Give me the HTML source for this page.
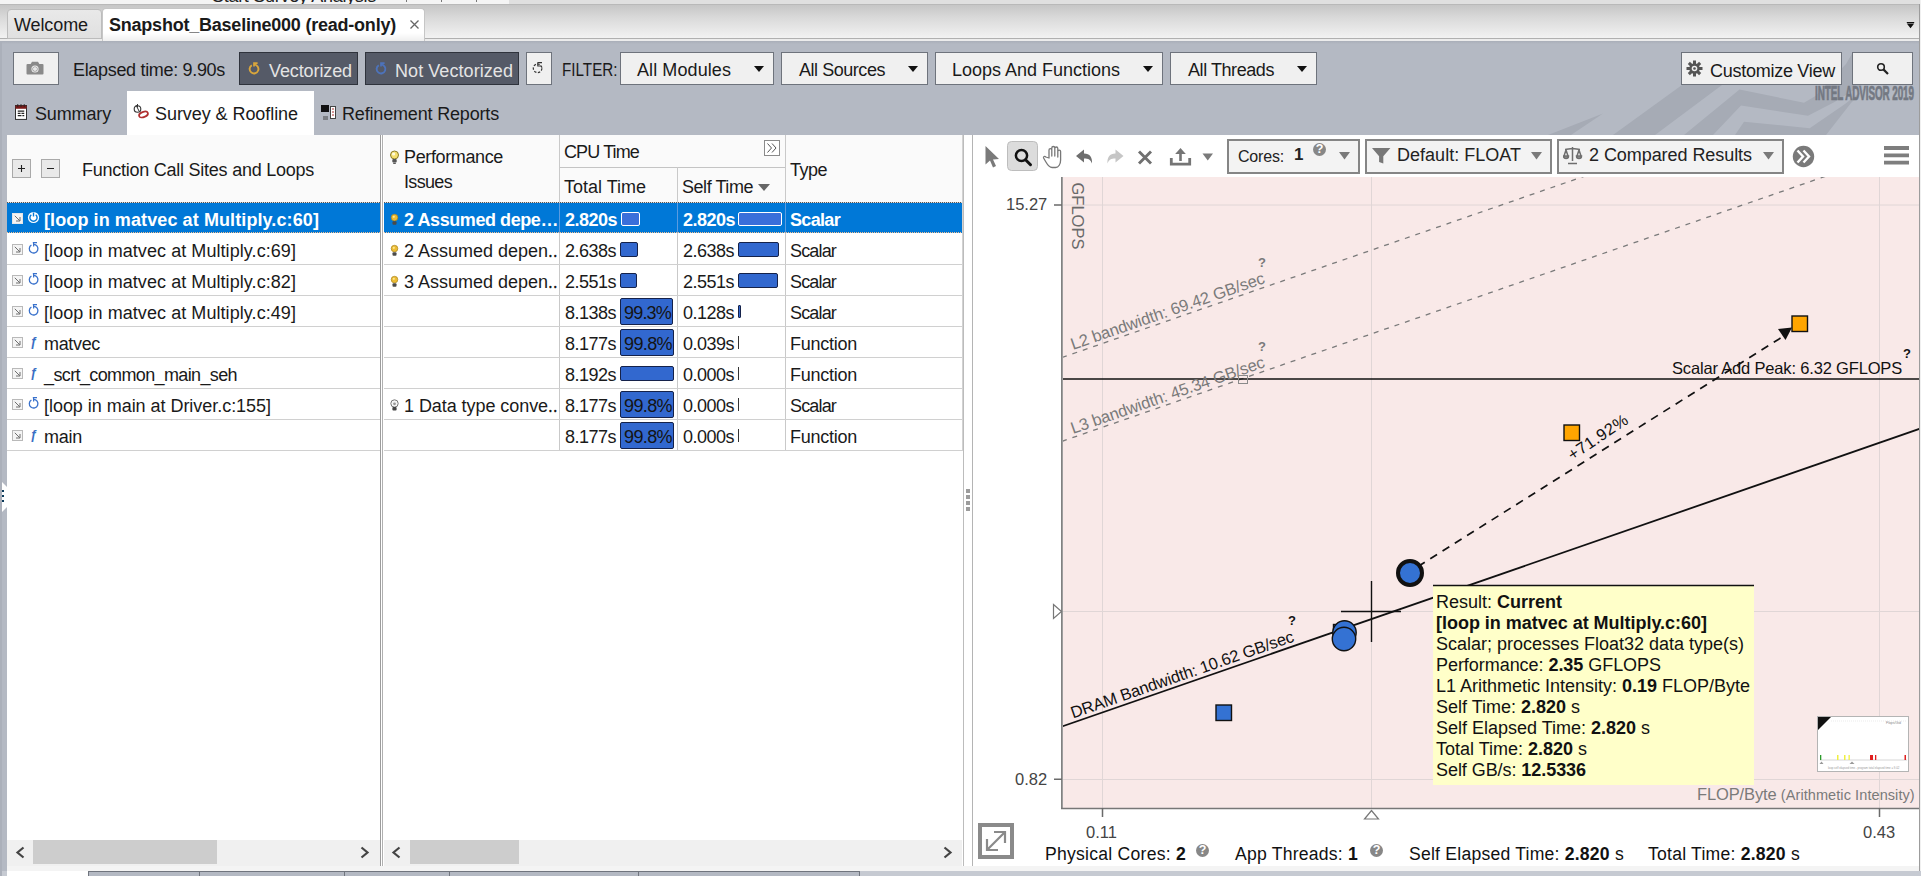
<!DOCTYPE html>
<html><head><meta charset="utf-8"><title>Intel Advisor</title>
<style>
*{box-sizing:border-box}
html,body{margin:0;padding:0}
body{width:1921px;height:876px;overflow:hidden;position:relative;background:#b4b9c3;font-family:"Liberation Sans",sans-serif;font-size:18px;color:#1a1a1a}
.a{position:absolute;white-space:pre}
.t{position:absolute;white-space:pre;line-height:24px;height:24px}
.btn{position:absolute;background:#f0f0f0;border:1px solid #6e737c}
.dk{position:absolute;background:#555a67;border:1px solid #2f333c;color:#e6e6e6}
.arr{position:absolute;width:0;height:0;border-left:5.8px solid transparent;border-right:5.8px solid transparent;border-top:6.4px solid #111}

.hdr{position:absolute;background:#fafafa}
.vl{position:absolute;width:1px;background:#c9c9c9}
.hl{position:absolute;height:1px;background:#d0d0d0}
.sel{position:absolute;background:#0078d7;height:30px}
.ex{position:absolute;width:12px;height:12px;border:1px solid #b4b4b4;background:#fbfbfb}
.bar{position:absolute;background:#3268cf;border:1px solid #15224a;border-radius:2px}
.bart{position:absolute;white-space:pre;font-size:18px;line-height:24px;color:#141414}
.sb{position:absolute;background:#f0f0f0;height:26px;top:840px}
.th{position:absolute;background:#cdcdcd;height:24px;top:840px}

.rbox{position:absolute;top:139px;height:35px;border:2px solid #858585;background:#f3f3f3}
.ct{position:absolute;white-space:pre;font-size:17px;line-height:20px;height:20px;color:#222}
.tip{position:absolute;white-space:pre;font-size:18px;line-height:21px;height:21px;color:#111;left:1436px}
.q{position:absolute;width:13px;height:13px;border-radius:50%;background:#878787;color:#fff;font-size:12.5px;font-weight:700;line-height:13.5px;text-align:center}
svg text{font-family:"Liberation Sans",sans-serif}
/*SECTION-CSS*/
</style></head>
<body>
<!-- top strip -->
<div class="a" style="left:0;top:0;width:1921px;height:4px;background:#f4f4f4"></div>
<div class="a" style="left:509px;top:0;width:1412px;height:4px;background:#e0e0e0"></div>
<div class="a" style="left:0;top:4px;width:1921px;height:1px;background:#b9b9b9"></div>
<div class="a" style="left: 212px; top: -13px; width: 170px; height: 17px; overflow: hidden; font-size: 18px; line-height: 19px; color: rgb(34, 34, 34); letter-spacing: -0.289px;">Start Survey Analysis</div><div class="a" style="left:406px;top:0;width:1px;height:2px;background:#777"></div><div class="a" style="left:441px;top:0;width:1px;height:2px;background:#777"></div><div class="a" style="left:476px;top:0;width:1px;height:2px;background:#777"></div>
<!-- tab bar -->
<div class="a" style="left:0;top:5px;width:1921px;height:33px;background:linear-gradient(#c6c6c6,#d8d8d8 35%,#f2f2f2)"></div>
<div class="a" style="left:0;top:38px;width:1921px;height:1px;background:#b0b0b0"></div><div class="a" style="left:0;top:39px;width:1921px;height:2px;background:#ececec"></div>
<div class="a" style="left:0;top:41px;width:1921px;height:3px;background:linear-gradient(#a9aeb8,#b4b9c3)"></div>
<div class="a" style="left:7px;top:9px;width:95px;height:30px;background:linear-gradient(#e9e9e9,#e0e0e0);border:1px solid #bcbcbc;border-radius:4px 4px 0 0"></div>
<div class="t" id="t_welcome" style="left: 14px; top: 13px; letter-spacing: -0.1px;">Welcome</div>
<div class="a" style="left:102px;top:8px;width:323px;height:33px;background:linear-gradient(#fff 75%,#efefef);border:1px solid #c6c6c6;border-bottom:none;border-radius:4px 4px 0 0"></div>
<div class="t" id="t_snap" style="left: 109px; top: 13px; font-weight: 700; letter-spacing: -0.222px;">Snapshot_Baseline000 (read-only)</div>
<svg class="a" style="left:409px;top:19px" width="11" height="11"><path d="M1.5 1.5 L9.5 9.5 M9.5 1.5 L1.5 9.5" stroke="#666" stroke-width="1.300" fill="none"></path></svg>
<svg class="a" style="left:1906px;top:21px" width="9" height="8"><path d="M.8 1h7.400v.9h-7.400zM.8 2.600h7.400l-3.700 4.600z" fill="#111"></path></svg>

<!-- toolbar decorative chevrons -->
<svg class="a" style="left:1480px;top:41px" width="441" height="94" viewBox="1480 41 441 94">
<g fill="#a6abb5">
<path d="M1548 135 L1603 113.500 L1571 135 Z"></path>
<path d="M1613 135 L1682 85 L1722 85 L1655 135 Z"></path>
<path d="M1684 135 L1739.500 89.500 L1804 102.700 L1815.500 96 L1846 64 L1853 52 L1880 52 L1880 85 L1862 85 L1834.600 102 L1808 115.800 L1741 105.600 L1713 135 Z"></path>
<path d="M1735 135 L1744 121.700 L1809.700 128.300 L1845 104 L1868 86 L1851 103 L1826 135 Z"></path>
</g>
</svg>
<!-- camera -->
<div class="btn" style="left:13px;top:52px;width:46px;height:33px"></div>
<svg class="a" style="left:26px;top:60px" width="18" height="16" viewBox="0 0 18 16"><path d="M1.5 4 h3.2 l1.3 -2.2 h6 l1.3 2.2 h3.2 a1 1 0 0 1 1 1 v8.5 a1 1 0 0 1 -1 1 h-15 a1 1 0 0 1 -1 -1 v-8.5 a1 1 0 0 1 1 -1z" fill="#8a8a8a"></path><circle cx="9" cy="9" r="3.6" fill="#f0f0f0"></circle><circle cx="9" cy="9" r="2.6" fill="#8a8a8a"></circle><circle cx="9" cy="9" r="2.1" fill="#e8e8e8"></circle></svg>
<div class="t" id="t_el" style="left: 73px; top: 58px; letter-spacing: -0.321px;">Elapsed time: 9.90s</div>
<!-- Vectorized -->
<div class="dk" style="left:239px;top:52px;width:119px;height:33px"></div>
<svg class="a" style="left:247px;top:61px" width="14" height="15" viewBox="0 0 14 15"><path d="M7 3.600 A4.400 4.400 0 1 1 4.800 4.200" stroke="#d9a63c" stroke-width="1.900" fill="none"></path><path d="M6.200 2.200 H10.600 M7 1.400 V5.600" stroke="#d9a63c" stroke-width="1.700" fill="none"></path></svg>
<div class="t" style="left: 269px; top: 59px; color: rgb(228, 228, 228); letter-spacing: -0.106px;">Vectorized</div>
<div class="dk" style="left:365px;top:52px;width:154px;height:33px"></div>
<svg class="a" style="left:374px;top:61px" width="14" height="15" viewBox="0 0 14 15"><path d="M7 3.600 A4.400 4.400 0 1 1 4.800 4.200" stroke="#4d73bb" stroke-width="1.900" fill="none"></path><path d="M6.200 2.200 H10.600 M7 1.400 V5.600" stroke="#4d73bb" stroke-width="1.700" fill="none"></path></svg>
<div class="t" style="left: 395px; top: 59px; color: rgb(228, 228, 228); letter-spacing: 0.067px;">Not Vectorized</div>
<div class="btn" style="left:526px;top:52px;width:26px;height:33px"></div>
<svg class="a" style="left:531px;top:60px" width="14" height="15" viewBox="0 0 14 15"><circle cx="6.600" cy="8.300" r="4.300" stroke="#333" stroke-width="1.200" fill="none" stroke-dasharray="2.400 1.500"></circle><path d="M6.500 2.600 H11 M6.800 2.600 V6 H10" stroke="#333" stroke-width="1.100" fill="none"></path></svg>
<div class="t" style="left:562px;top:58px;transform-origin:0 0;transform:scaleX(.845)">FILTER:</div>
<div class="btn" style="left:620px;top:52px;width:154px;height:33px"></div>
<div class="t" style="left: 637px; top: 58px; letter-spacing: 0.087px;">All Modules</div>
<div class="arr" style="left:754px;top:66px"></div>
<div class="btn" style="left:781px;top:52px;width:147px;height:33px"></div>
<div class="t" style="left: 799px; top: 58px; letter-spacing: -0.459px;">All Sources</div>
<div class="arr" style="left:908px;top:66px"></div>
<div class="btn" style="left:935px;top:52px;width:228px;height:33px"></div>
<div class="t" style="left: 952px; top: 58px; letter-spacing: -0.007px;">Loops And Functions</div>
<div class="arr" style="left:1143px;top:66px"></div>
<div class="btn" style="left:1170px;top:52px;width:147px;height:33px"></div>
<div class="t" style="left: 1188px; top: 58px; letter-spacing: -0.429px;">All Threads</div>
<div class="arr" style="left:1297px;top:66px"></div>
<div class="btn" style="left:1681px;top:52px;width:161px;height:33px"></div>
<svg class="a" style="left:1686px;top:60px" width="17" height="17" viewBox="-8.5 -8.5 17 17"><g fill="#555"><circle r="5.2"></circle><rect x="-1.5" y="-8" width="3" height="16"></rect><rect x="-1.5" y="-8" width="3" height="16" transform="rotate(45)"></rect><rect x="-1.5" y="-8" width="3" height="16" transform="rotate(90)"></rect><rect x="-1.5" y="-8" width="3" height="16" transform="rotate(135)"></rect></g><circle r="2.8" fill="#f0f0f0"></circle><circle r="1.3" fill="#555"></circle></svg>
<div class="t" style="left: 1710px; top: 59px; letter-spacing: -0.266px;">Customize View</div>
<div class="btn" style="left:1852px;top:52px;width:61px;height:33px"></div>
<svg class="a" style="left:1876px;top:62px" width="14" height="14" viewBox="0 0 14 14"><circle cx="5" cy="5" r="3.3" stroke="#222" stroke-width="1.6" fill="none"></circle><path d="M7.4 7.4 L12 12" stroke="#222" stroke-width="2.2"></path></svg>
<div class="a" id="t_intel" style="left:1815px;top:82px;font-size:20px;line-height:22px;font-weight:700;color:#737882;transform-origin:0 0;transform:scaleX(.495);-webkit-text-stroke:.7px #737882;letter-spacing:-.2px">INTEL ADVISOR 2019</div>
<!-- subtabs -->
<div class="a" style="left:127px;top:91px;width:187px;height:44px;background:#fff"></div>
<svg class="a" style="left:15px;top:104px" width="12" height="16" viewBox="0 0 13 17"><rect x=".5" y="1.5" width="12" height="15" fill="#fff" stroke="#222"></rect><rect x=".5" y="1.5" width="12" height="3.5" fill="#7a1a1a"></rect><path d="M3 0v3M6.5 0v3M10 0v3" stroke="#222"></path><path d="M3 7.5h7M3 10h3M7 10h3M3 12.5h4M8 12.5h2" stroke="#222" stroke-width="1.3"></path></svg>
<div class="t" style="left: 35px; top: 102px; letter-spacing: -0.145px;">Summary</div>
<svg class="a" style="left:132px;top:103px" width="18" height="17" viewBox="0 0 18 17"><circle cx="5.5" cy="6" r="3.3" stroke="#333" stroke-width="1.1" fill="none"></circle><path d="M5.5 1v3.5M4 2l3 6" stroke="#333" stroke-width="1" fill="none"></path><ellipse cx="11.5" cy="11.5" rx="4.6" ry="2.6" transform="rotate(-22 11.5 11.5)" stroke="#b03030" stroke-width="1.8" fill="#fff"></ellipse></svg>
<div class="t" style="left: 155px; top: 102px; letter-spacing: -0.063px;">Survey &amp; Roofline</div>
<svg class="a" style="left:320px;top:104px" width="17" height="17" viewBox="0 0 17 17"><rect x="1" y="1" width="8" height="7" fill="#111"></rect><rect x="10.5" y="2.5" width="5" height="12" fill="#fff" stroke="#444"></rect><path d="M12 5h2M12 8h2M12 11h2" stroke="#b03030" stroke-width="1.2"></path><path d="M3 13h5M3 15h5" stroke="#444" stroke-width="1"></path></svg>
<div class="t" style="left: 342px; top: 102px; letter-spacing: -0.171px;">Refinement Reports</div>

<!-- left panel -->
<div class="a" style="left:7px;top:135px;width:373px;height:731px;background:#fff"></div>
<div class="hdr" style="left:7px;top:135px;width:373px;height:67px"></div>
<div class="hl" style="left:7px;top:202px;width:373px;background:#bdbdbd"></div>
<div class="a" style="left:12px;top:159px;width:19px;height:19px;background:#e9e9e9;border:1px solid #a9a9a9"></div>
<div class="a" style="left:41px;top:159px;width:19px;height:19px;background:#e9e9e9;border:1px solid #a9a9a9"></div>
<svg class="a" style="left:12px;top:159px" width="48" height="19"><path d="M6 9.5h7M9.5 6v7M35 9.5h7" stroke="#222" stroke-width="1.1"></path></svg>
<div class="t" style="left: 82px; top: 158px; letter-spacing: -0.247px;">Function Call Sites and Loops</div>
<div class="sel" style="left:7px;top:203px;width:373px"></div>
<div class="a" style="left:7px;top:202px;width:373px;height:1px;background:repeating-linear-gradient(90deg,#555 0 1px,#ddd 1px 2px)"></div>
<div class="a" style="left:7px;top:232px;width:373px;height:1px;background:repeating-linear-gradient(90deg,#f4c090 0 1px,#0078d7 1px 2px)"></div>
<svg class="a" style="left:12px;top:213px" width="11" height="11" viewBox="0 0 11 11"><rect x=".5" y=".5" width="10" height="10" fill="#f4f4f4" stroke="#e6e6e6"></rect><path d="M2.800 2.800 L7.800 7.800 M8 4 V8 H4" stroke="#6e6e6e" stroke-width="1" fill="none"></path></svg>
<svg class="a" style="left:27px;top:210px" width="13" height="14" viewBox="0 0 13 14"><circle cx="6.5" cy="7.5" r="5.6" fill="#fff"></circle><path d="M4.3 4.8 A3.6 3.6 0 1 0 8.7 4.8" stroke="#0078d7" stroke-width="1.4" fill="none"></path><path d="M6.5 2.5 v4" stroke="#0078d7" stroke-width="1.4"></path></svg>
<div class="t" style="left: 44px; top: 208px; color: rgb(255, 255, 255); font-weight: 700; letter-spacing: 0.099px;">[loop in matvec at Multiply.c:60]</div>
<div class="hl" style="left:7px;top:264px;width:373px"></div>
<svg class="a" style="left:12px;top:244px" width="11" height="11" viewBox="0 0 11 11"><rect x=".5" y=".5" width="10" height="10" fill="#f4f4f4" stroke="#b9b9b9"></rect><path d="M2.800 2.800 L7.800 7.800 M8 4 V8 H4" stroke="#6e6e6e" stroke-width="1" fill="none"></path></svg>
<svg class="a" style="left:27px;top:241px" width="13" height="14" viewBox="0 0 13 14"><path d="M6.600 3.400 A4.300 4.300 0 1 1 4.400 4 " stroke="#3a72cc" stroke-width="1.300" fill="none"></path><path d="M5.800 1.600 H10 M6.600 1.600 V5.400" stroke="#3a72cc" stroke-width="1.200" fill="none"></path></svg>
<div class="t" style="left: 44px; top: 239px; letter-spacing: 0.067px;">[loop in matvec at Multiply.c:69]</div>
<div class="hl" style="left:7px;top:295px;width:373px"></div>
<svg class="a" style="left:12px;top:275px" width="11" height="11" viewBox="0 0 11 11"><rect x=".5" y=".5" width="10" height="10" fill="#f4f4f4" stroke="#b9b9b9"></rect><path d="M2.800 2.800 L7.800 7.800 M8 4 V8 H4" stroke="#6e6e6e" stroke-width="1" fill="none"></path></svg>
<svg class="a" style="left:27px;top:272px" width="13" height="14" viewBox="0 0 13 14"><path d="M6.600 3.400 A4.300 4.300 0 1 1 4.400 4 " stroke="#3a72cc" stroke-width="1.300" fill="none"></path><path d="M5.800 1.600 H10 M6.600 1.600 V5.400" stroke="#3a72cc" stroke-width="1.200" fill="none"></path></svg>
<div class="t" style="left: 44px; top: 270px; letter-spacing: 0.067px;">[loop in matvec at Multiply.c:82]</div>
<div class="hl" style="left:7px;top:326px;width:373px"></div>
<svg class="a" style="left:12px;top:306px" width="11" height="11" viewBox="0 0 11 11"><rect x=".5" y=".5" width="10" height="10" fill="#f4f4f4" stroke="#b9b9b9"></rect><path d="M2.800 2.800 L7.800 7.800 M8 4 V8 H4" stroke="#6e6e6e" stroke-width="1" fill="none"></path></svg>
<svg class="a" style="left:27px;top:303px" width="13" height="14" viewBox="0 0 13 14"><path d="M6.600 3.400 A4.300 4.300 0 1 1 4.400 4 " stroke="#3a72cc" stroke-width="1.300" fill="none"></path><path d="M5.800 1.600 H10 M6.600 1.600 V5.400" stroke="#3a72cc" stroke-width="1.200" fill="none"></path></svg>
<div class="t" style="left: 44px; top: 301px; letter-spacing: 0.067px;">[loop in matvec at Multiply.c:49]</div>
<div class="hl" style="left:7px;top:357px;width:373px"></div>
<svg class="a" style="left:12px;top:337px" width="11" height="11" viewBox="0 0 11 11"><rect x=".5" y=".5" width="10" height="10" fill="#f4f4f4" stroke="#b9b9b9"></rect><path d="M2.800 2.800 L7.800 7.800 M8 4 V8 H4" stroke="#6e6e6e" stroke-width="1" fill="none"></path></svg>
<div class="a" style="left:30px;top:335px;font-weight:700;font-style:italic;font-size:12.500px;line-height:14px;color:#3a6fc4">ƒ</div>
<div class="t" style="left: 44px; top: 332px; letter-spacing: -0.339px;">matvec</div>
<div class="hl" style="left:7px;top:388px;width:373px"></div>
<svg class="a" style="left:12px;top:368px" width="11" height="11" viewBox="0 0 11 11"><rect x=".5" y=".5" width="10" height="10" fill="#f4f4f4" stroke="#b9b9b9"></rect><path d="M2.800 2.800 L7.800 7.800 M8 4 V8 H4" stroke="#6e6e6e" stroke-width="1" fill="none"></path></svg>
<div class="a" style="left:30px;top:366px;font-weight:700;font-style:italic;font-size:12.500px;line-height:14px;color:#3a6fc4">ƒ</div>
<div class="t" style="left: 44px; top: 363px; letter-spacing: -0.624px;">_scrt_common_main_seh</div>
<div class="hl" style="left:7px;top:419px;width:373px"></div>
<svg class="a" style="left:12px;top:399px" width="11" height="11" viewBox="0 0 11 11"><rect x=".5" y=".5" width="10" height="10" fill="#f4f4f4" stroke="#b9b9b9"></rect><path d="M2.800 2.800 L7.800 7.800 M8 4 V8 H4" stroke="#6e6e6e" stroke-width="1" fill="none"></path></svg>
<svg class="a" style="left:27px;top:396px" width="13" height="14" viewBox="0 0 13 14"><path d="M6.600 3.400 A4.300 4.300 0 1 1 4.400 4 " stroke="#3a72cc" stroke-width="1.300" fill="none"></path><path d="M5.800 1.600 H10 M6.600 1.600 V5.400" stroke="#3a72cc" stroke-width="1.200" fill="none"></path></svg>
<div class="t" style="left: 44px; top: 394px; letter-spacing: -0.037px;">[loop in main at Driver.c:155]</div>
<div class="hl" style="left:7px;top:450px;width:373px"></div>
<svg class="a" style="left:12px;top:430px" width="11" height="11" viewBox="0 0 11 11"><rect x=".5" y=".5" width="10" height="10" fill="#f4f4f4" stroke="#b9b9b9"></rect><path d="M2.800 2.800 L7.800 7.800 M8 4 V8 H4" stroke="#6e6e6e" stroke-width="1" fill="none"></path></svg>
<div class="a" style="left:30px;top:428px;font-weight:700;font-style:italic;font-size:12.500px;line-height:14px;color:#3a6fc4">ƒ</div>
<div class="t" style="left: 44px; top: 425px; letter-spacing: -0.254px;">main</div>
<svg class="a" style="left:0;top:480px" width="8" height="34"><path d="M1 1 L7 7 V27 L1 33z" fill="#fff"></path><path d="M2 11h2M2 16h2M2 21h2" stroke="#0a3a5a" stroke-width="2"></path></svg>
<div class="a" style="left:380px;top:135px;width:4px;height:731px;background:#fff"></div>
<div class="vl" style="left:380px;top:135px;height:731px;background:#9c9c9c"></div>
<div class="vl" style="left:382px;top:135px;height:731px;background:#b0b0b0"></div>
<div class="sb" style="left:7px;width:373px"></div><div class="th" style="left:33px;width:184px"></div>
<svg class="a" style="left:14px;top:846px" width="12" height="13"><path d="M9.5 1.5 L3.5 6.5 L9.5 11.5" stroke="#444" stroke-width="2.2" fill="none"></path></svg>
<svg class="a" style="left:359px;top:846px" width="12" height="13"><path d="M2.5 1.5 L8.5 6.5 L2.5 11.5" stroke="#444" stroke-width="2.2" fill="none"></path></svg>
<!-- grid -->
<div class="a" style="left:384px;top:135px;width:579px;height:731px;background:#fff"></div>
<div class="hdr" style="left:384px;top:135px;width:579px;height:67px"></div>
<div class="hl" style="left:384px;top:202px;width:579px;background:#bdbdbd"></div>
<div class="hl" style="left:559px;top:167px;width:226px;background:#c4c4c4"></div>
<div class="vl" style="left:559px;top:135px;height:316px"></div>
<div class="vl" style="left:677px;top:167px;height:284px"></div>
<div class="vl" style="left:785px;top:135px;height:316px"></div>
<div class="vl" style="left:962px;top:135px;height:316px;background:#d2d2d2"></div>
<svg class="a" style="left:389px;top:150px" width="11" height="15" viewBox="0 0 11 15"><circle cx="5.5" cy="5" r="4" fill="#f6e070" stroke="#8a7a2a" stroke-width="1"></circle><circle cx="4.6" cy="4" r="1.6" fill="#fffbe0"></circle><rect x="3.3" y="9" width="4.4" height="3.6" rx="1" fill="#555"></rect><path d="M4.2 13.3h2.6" stroke="#333"></path></svg>
<div class="t" style="left: 404px; top: 145px; letter-spacing: -0.368px;">Performance</div>
<div class="t" style="left: 404px; top: 170px; letter-spacing: -0.672px;">Issues</div>
<div class="t" style="left: 564px; top: 140px; letter-spacing: -0.877px;">CPU Time</div>
<svg class="a" style="left:764px;top:140px" width="16" height="16"><rect x=".5" y=".5" width="15" height="15" fill="#fff" stroke="#8a8a8a"></rect><path d="M3.5 3.5 L7.5 8 L3.5 12.5 M8 3.5 L12 8 L8 12.5" stroke="#555" stroke-width="1" fill="none"></path></svg>
<div class="t" style="left: 564px; top: 175px; letter-spacing: -0.003px;">Total Time</div>
<div class="t" style="left: 682px; top: 175px; letter-spacing: -0.448px;">Self Time</div>
<div class="a" style="left:758px;top:184px;width:0;height:0;border-left:6.5px solid transparent;border-right:6.5px solid transparent;border-top:7px solid #666"></div>
<div class="t" style="left: 790px; top: 158px; letter-spacing: -0.508px;">Type</div>
<div class="sel" style="left:384px;top:203px;width:578px"></div>
<div class="a" style="left:384px;top:202px;width:578px;height:1px;background:repeating-linear-gradient(90deg,#555 0 1px,#ddd 1px 2px)"></div>
<div class="a" style="left:384px;top:232px;width:578px;height:1px;background:repeating-linear-gradient(90deg,#f4c090 0 1px,#0078d7 1px 2px)"></div>
<div class="vl" style="left:559px;top:203px;height:30px;background:#5a9be0"></div>
<div class="vl" style="left:677px;top:203px;height:30px;background:#5a9be0"></div>
<div class="vl" style="left:785px;top:203px;height:30px;background:#5a9be0"></div>
<svg class="a" style="left:390px;top:213px" width="9" height="13" viewBox="0 0 9 13"><circle cx="4.5" cy="4.600" r="3.300" fill="#ecbc34" stroke="#a88420" stroke-width=".700"></circle><circle cx="3.800" cy="3.800" r="1.100" fill="#ffe890"></circle><rect x="2.500" y="8.200" width="4" height="3.600" rx="1" fill="#4a4a4a"></rect></svg>
<div class="t" style="left: 404px; top: 208px; color: rgb(255, 255, 255); font-weight: 700; letter-spacing: -0.426px;">2 Assumed depe…</div>
<div class="t" style="left: 565px; top: 208px; color: rgb(255, 255, 255); font-weight: 700; letter-spacing: -0.51px;">2.820s</div>
<div class="bar" style="left:621px;top:212px;width:19px;height:14px;background:#3a6fda;border-color:#fff"></div>
<div class="t" style="left: 683px; top: 208px; color: rgb(255, 255, 255); font-weight: 700; letter-spacing: -0.51px;">2.820s</div>
<div class="bar" style="left:738px;top:212px;width:44px;height:14px;background:#3a6fda;border-color:#fff"></div>
<div class="t" style="left: 790px; top: 208px; color: rgb(255, 255, 255); font-weight: 700; letter-spacing: -0.674px;">Scalar</div>
<div class="hl" style="left:384px;top:264px;width:578px"></div>
<svg class="a" style="left:390px;top:244px" width="9" height="13" viewBox="0 0 9 13"><circle cx="4.5" cy="4.600" r="3.300" fill="#ecbc34" stroke="#a88420" stroke-width=".700"></circle><circle cx="3.800" cy="3.800" r="1.100" fill="#ffe890"></circle><rect x="2.500" y="8.200" width="4" height="3.600" rx="1" fill="#4a4a4a"></rect></svg>
<div class="t" style="left: 404px; top: 239px; letter-spacing: -0.007px;">2 Assumed depen‥</div>
<div class="t" style="left: 565px; top: 239px; letter-spacing: -0.508px;">2.638s</div>
<div class="bar" style="left:620px;top:242px;width:18px;height:15px"></div>
<div class="t" style="left: 683px; top: 239px; letter-spacing: -0.508px;">2.638s</div>
<div class="bar" style="left:738px;top:242px;width:41px;height:15px"></div>
<div class="t" style="left: 790px; top: 239px; letter-spacing: -0.839px;">Scalar</div>
<div class="hl" style="left:384px;top:295px;width:578px"></div>
<svg class="a" style="left:390px;top:275px" width="9" height="13" viewBox="0 0 9 13"><circle cx="4.5" cy="4.600" r="3.300" fill="#ecbc34" stroke="#a88420" stroke-width=".700"></circle><circle cx="3.800" cy="3.800" r="1.100" fill="#ffe890"></circle><rect x="2.500" y="8.200" width="4" height="3.600" rx="1" fill="#4a4a4a"></rect></svg>
<div class="t" style="left: 404px; top: 270px; letter-spacing: -0.007px;">3 Assumed depen‥</div>
<div class="t" style="left: 565px; top: 270px; letter-spacing: -0.508px;">2.551s</div>
<div class="bar" style="left:620px;top:273px;width:17px;height:15px"></div>
<div class="t" style="left: 683px; top: 270px; letter-spacing: -0.508px;">2.551s</div>
<div class="bar" style="left:738px;top:273px;width:40px;height:15px"></div>
<div class="t" style="left: 790px; top: 270px; letter-spacing: -0.839px;">Scalar</div>
<div class="hl" style="left:384px;top:326px;width:578px"></div>
<div class="t" style="left: 565px; top: 301px; letter-spacing: -0.508px;">8.138s</div>
<div class="bar" style="left:620px;top:298px;width:53px;height:27px"></div><div class="bart" style="left: 624px; top: 301px; letter-spacing: -0.809px;">99.3%</div>
<div class="t" style="left: 683px; top: 301px; letter-spacing: -0.508px;">0.128s</div>
<div class="a" style="left:738px;top:305px;width:3px;height:13px;background:#3268cf;border:1px solid #15224a;border-radius:1px"></div>
<div class="t" style="left: 790px; top: 301px; letter-spacing: -0.839px;">Scalar</div>
<div class="hl" style="left:384px;top:357px;width:578px"></div>
<div class="t" style="left: 565px; top: 332px; letter-spacing: -0.508px;">8.177s</div>
<div class="bar" style="left:620px;top:329px;width:54px;height:27px"></div><div class="bart" style="left: 624px; top: 332px; letter-spacing: -0.609px;">99.8%</div>
<div class="t" style="left: 683px; top: 332px; letter-spacing: -0.508px;">0.039s</div>
<div class="a" style="left:738px;top:336px;width:1px;height:13px;background:#333"></div>
<div class="t" style="left: 790px; top: 332px; letter-spacing: -0.256px;">Function</div>
<div class="hl" style="left:384px;top:388px;width:578px"></div>
<div class="t" style="left: 565px; top: 363px; letter-spacing: -0.508px;">8.192s</div>
<div class="bar" style="left:620px;top:366px;width:54px;height:15px"></div>
<div class="t" style="left: 683px; top: 363px; letter-spacing: -0.508px;">0.000s</div>
<div class="a" style="left:738px;top:367px;width:1px;height:13px;background:#333"></div>
<div class="t" style="left: 790px; top: 363px; letter-spacing: -0.256px;">Function</div>
<div class="hl" style="left:384px;top:419px;width:578px"></div>
<svg class="a" style="left:390px;top:399px" width="9" height="13" viewBox="0 0 9 13"><circle cx="4.5" cy="4.5" r="3.7" fill="#f4f4f4" stroke="#777" stroke-width="1"></circle><circle cx="4.5" cy="4.8" r="1.4" fill="#999"></circle><rect x="2.4" y="8" width="4.2" height="3.6" rx="1" fill="#444"></rect></svg>
<div class="t" style="left: 404px; top: 394px; letter-spacing: -0.061px;">1 Data type conve‥</div>
<div class="t" style="left: 565px; top: 394px; letter-spacing: -0.508px;">8.177s</div>
<div class="bar" style="left:620px;top:391px;width:54px;height:27px"></div><div class="bart" style="left: 624px; top: 394px; letter-spacing: -0.609px;">99.8%</div>
<div class="t" style="left: 683px; top: 394px; letter-spacing: -0.508px;">0.000s</div>
<div class="a" style="left:738px;top:398px;width:1px;height:13px;background:#333"></div>
<div class="t" style="left: 790px; top: 394px; letter-spacing: -0.839px;">Scalar</div>
<div class="hl" style="left:384px;top:450px;width:578px"></div>
<div class="t" style="left: 565px; top: 425px; letter-spacing: -0.508px;">8.177s</div>
<div class="bar" style="left:620px;top:422px;width:54px;height:27px"></div><div class="bart" style="left: 624px; top: 425px; letter-spacing: -0.609px;">99.8%</div>
<div class="t" style="left: 683px; top: 425px; letter-spacing: -0.508px;">0.000s</div>
<div class="a" style="left:738px;top:429px;width:1px;height:13px;background:#333"></div>
<div class="t" style="left: 790px; top: 425px; letter-spacing: -0.256px;">Function</div>
<div class="sb" style="left:384px;width:578px"></div><div class="th" style="left:410px;width:109px"></div>
<svg class="a" style="left:390px;top:846px" width="12" height="13"><path d="M9.5 1.5 L3.5 6.5 L9.5 11.5" stroke="#444" stroke-width="2.2" fill="none"></path></svg>
<svg class="a" style="left:942px;top:846px" width="12" height="13"><path d="M2.5 1.5 L8.5 6.5 L2.5 11.5" stroke="#444" stroke-width="2.2" fill="none"></path></svg>
<div class="a" style="left:963px;top:135px;width:13px;height:731px;background:#fff"></div>
<div class="vl" style="left:963px;top:135px;height:731px;background:#bcbcbc"></div><div class="vl" style="left:972px;top:135px;height:731px;background:#b4b4b4"></div>
<svg class="a" style="left:966px;top:489px" width="4" height="22"><path d="M0 0h4v4h-4zM0 6h4v4h-4zM0 12h4v4h-4zM0 18h4v4h-4z" fill="#9c9c9c"></path></svg>
<!-- roofline panel -->
<div class="a" style="left:973px;top:135px;width:946px;height:731px;background:#fff"></div>
<svg class="a" style="left:980px;top:139px" width="240" height="36" viewBox="980 139 240 36">
<path d="M985.500 146 V164.500 L990 160.500 L993 167.500 L996 166 L993 159.500 L999 159 Z" fill="#7a7a7a"></path>
<rect x="1007.500" y="141.500" width="30" height="29" rx="4" fill="#dcdcdc" stroke="#bdbdbd"></rect>
<circle cx="1021.500" cy="155.500" r="5.600" fill="none" stroke="#111" stroke-width="2.500"></circle><path d="M1025.800 160 L1030.500 164.700" stroke="#111" stroke-width="3" stroke-linecap="round"></path>
<g fill="none" stroke="#777" stroke-width="1.300" stroke-linejoin="round"><path d="M1049 158 V150 a1.400 1.400 0 0 1 2.800 0 V156 V148 a1.500 1.500 0 0 1 3 0 V156 V148.500 a1.500 1.500 0 0 1 3 0 V157 V151.500 a1.400 1.400 0 0 1 2.800 0 V160 c0 4 -2 7.500 -5 7.500 h-3.500 c-3 0 -4.500 -2.500 -6.500 -6 l-2 -3.500 c-.6 -1.400 1.200 -2.200 2.200 -1 z"></path></g>
<path d="M1076 156 L1084 149.500 V153.500 C1090 153.500 1092.500 157.500 1092 163.500 C1090.500 159.500 1088.500 158.500 1084 158.500 V162.500 Z" fill="#6e6e6e"></path>
<path d="M1123.500 156 L1115.500 149.500 V153.500 C1109.500 153.500 1107 157.500 1107.500 163.500 C1109 159.500 1111 158.500 1115.500 158.500 V162.500 Z" fill="#c6c6c6"></path>
<path d="M1139 151.500 L1151 163.500 M1151 151.500 L1139 163.500" stroke="#707070" stroke-width="2.900"></path>
<path d="M1171.300 158 V164.200 H1189.700 V158" fill="none" stroke="#757575" stroke-width="2.800"></path><path d="M1180.500 161 V152" stroke="#757575" stroke-width="2.600"></path><path d="M1175.200 154 L1180.500 148 L1185.800 154 Z" fill="#757575"></path>
<path d="M1202.500 153.500 H1213 L1207.750 160.500 Z" fill="#7a7a7a"></path>
</svg>
<div class="rbox" style="left:1227px;width:133px"></div>
<div class="ct" style="left: 1238px; top: 147px; font-size: 16px; letter-spacing: -0.188px;">Cores:</div>
<div class="ct" style="left:1294px;top:145px;font-weight:700;font-size:17px">1</div>
<div class="q" style="left:1313px;top:143px">?</div>
<svg class="a" style="left:1339px;top:152px" width="12" height="8"><path d="M0 0H11L5.5 7.500Z" fill="#7a7a7a"></path></svg>
<div class="rbox" style="left:1365px;width:187px"></div>
<svg class="a" style="left:1372px;top:148px" width="19" height="17"><path d="M0 0H18.400L11.300 8.200V15.500L7.100 14V8.200Z" fill="#777"></path></svg>
<div class="ct" style="left: 1397px; top: 145px; font-size: 18px; letter-spacing: 0.02px;">Default: FLOAT</div>
<svg class="a" style="left:1531px;top:152px" width="12" height="8"><path d="M0 0H11L5.5 7.500Z" fill="#7a7a7a"></path></svg>
<div class="rbox" style="left:1557px;width:227px"></div>
<svg class="a" style="left:1563px;top:146px" width="20" height="19" viewBox="0 0 20 19"><g stroke="#6e6e6e" fill="none" stroke-width="1.500"><path d="M9.5 1 V15 M5 17.500 H14 M2 3.500 C5 3.500 6 2.500 9.5 2.500 C13 2.500 14 3.500 17 3.500"></path><path d="M3 4 L1 10 M3 4 L5 10 M16 4 L14 10 M16 4 L18 10"></path><path d="M.5 10 a2.500 2.500 0 0 0 5 0z M13.500 10 a2.500 2.500 0 0 0 5 0z" fill="#999"></path></g></svg>
<div class="ct" style="left: 1589px; top: 145px; font-size: 18px; letter-spacing: -0.06px;">2 Compared Results</div>
<svg class="a" style="left:1763px;top:152px" width="12" height="8"><path d="M0 0H11L5.5 7.500Z" fill="#7a7a7a"></path></svg>
<svg class="a" style="left:1792px;top:145px" width="23" height="23" viewBox="0 0 23 23"><circle cx="11.500" cy="11.500" r="10.700" fill="#7a7a7a"></circle><path d="M5.500 5.500 L11 11.500 L5.500 17.500 M11.500 5.500 L17 11.500 L11.500 17.500" stroke="#fff" stroke-width="2.400" fill="none"></path></svg>
<svg class="a" style="left:1884px;top:146px" width="26" height="19"><path d="M0 2H25M0 9.300H25M0 16.600H25" stroke="#7e7e7e" stroke-width="3.800"></path></svg>
<svg class="a" style="left:973px;top:175px" width="948" height="691" viewBox="973 175 948 691" font-size="16.5">
<defs><clipPath id="cp"><rect x="1063" y="177" width="856" height="631"></rect></clipPath></defs>
<rect x="1063" y="177" width="856" height="631" fill="#f9e9e8"></rect>
<g stroke="#e0d6d6" stroke-width="1">
<path d="M1102.500 177V808"></path>
<path d="M1371.500 177V808"></path>
<path d="M1879.500 177V808"></path>
<path d="M1063 205H1919"></path>
<path d="M1063 611.500H1919"></path>
<path d="M1063 779.500H1919"></path>
</g>
<g clip-path="url(#cp)">
<path d="M1062 357.500 L1600 170.8" stroke="#7a7a7a" stroke-width="1.300" stroke-dasharray="5 6" fill="none"></path>
<path d="M1062 441.300 L1850 167.8" stroke="#7a7a7a" stroke-width="1.300" stroke-dasharray="5 6" fill="none"></path>
<path d="M1062 726.500 L1920 428.7" stroke="#111" stroke-width="1.800" fill="none"></path>
<path d="M1062 379H1920" stroke="#111" stroke-width="1.500"></path>
</g>
<text transform="translate(1073 350) rotate(-19.2)" fill="#7a7a7a" style="letter-spacing: -0.127px;">L2 bandwidth: 69.42 GB/sec</text>
<text transform="translate(1073 434) rotate(-19.2)" fill="#7a7a7a" style="letter-spacing: -0.127px;">L3 bandwidth: 45.34 GB/sec</text>
<text transform="translate(1073 718.500) rotate(-19.2)" fill="#111" style="letter-spacing: -0.156px;">DRAM Bandwidth: 10.62 GB/sec</text>
<text x="1672" y="374" fill="#111" style="letter-spacing: -0.171px;">Scalar Add Peak: 6.32 GFLOPS</text>
<text x="1258" y="267" font-size="13" font-weight="700" fill="#7a7a7a">?</text>
<text x="1258" y="351" font-size="13" font-weight="700" fill="#7a7a7a">?</text>
<text x="1288" y="625" font-size="13" font-weight="700" fill="#111">?</text>
<text x="1903" y="358" font-size="13" font-weight="700" fill="#111">?</text>
<rect x="1238.500" y="375.500" width="9" height="8" fill="none" stroke="#8a8a8a"></rect>
<path d="M1061.900 177V809" stroke="#747474" stroke-width="1.600"></path><path d="M1061 808.500H1919" stroke="#777" stroke-width="1.400"></path>
<g stroke="#6a6a6a" stroke-width="1.500"><path d="M1054 205H1062M1054 779.300H1062M1102.500 808V817M1879.500 808V817"></path></g>
<text x="1006" y="210" fill="#444">15.27</text><text x="1015" y="784.500" fill="#444">0.82</text><text x="1086" y="838" fill="#444">0.11</text><text x="1863" y="838" fill="#444">0.43</text>
<text transform="translate(1072 182.500) rotate(90)" fill="#6a6a6a">GFLOPS</text>
<text x="1697" y="800" fill="#7a7a7a"><tspan style="letter-spacing: -0.134px;">FLOP/Byte</tspan><tspan font-size="14.5" dx="4.300" style="letter-spacing: 0.084px;">(Arithmetic Intensity)</tspan></text>
<path d="M1053.500 604.500 L1061.500 611.500 L1053.500 618.500 Z" fill="#fff" stroke="#777" stroke-width="1.200"></path>
<path d="M1364.500 819 L1371.500 810.500 L1378.500 819 Z" fill="#fff" stroke="#777" stroke-width="1.200"></path>
<path d="M1418 566.500 L1783 336.500" stroke="#111" stroke-width="1.700" stroke-dasharray="8 6.500" fill="none"></path>
<path d="M1778 329 L1792 327.500 L1785.500 340 Z" fill="#111"></path>
<text transform="translate(1572.500 461) rotate(-34)" fill="#111" style="letter-spacing: 0.484px;">+71.92%</text>
<g stroke="#111" stroke-width="1.400">
<rect x="1792" y="316" width="15.500" height="15.500" fill="#ffa500"></rect><rect x="1564" y="425" width="15.500" height="15.500" fill="#ffa500"></rect>
<rect x="1216" y="705" width="15.500" height="15.500" fill="#3472d3"></rect>
<rect x="1333.500" y="624.500" width="15" height="15" fill="#3472d3"></rect>
<circle cx="1344.500" cy="632.500" r="11.700" fill="#3472d3"></circle><circle cx="1344" cy="639" r="11.700" fill="#3472d3"></circle>
<circle cx="1410" cy="573" r="12" fill="#3472d3" stroke-width="4"></circle>
</g>
<path d="M1371.500 581V642M1341 611.500H1401" stroke="#111" stroke-width="1.400"></path>
<rect x="1433" y="585" width="321" height="200" fill="#ffffc9"></rect><path d="M1433 585.500H1754" stroke="#111" stroke-width="1.300"></path>
<rect x="1817.500" y="716.500" width="91" height="55" fill="#fff" stroke="#b4b4b4"></rect><path d="M1818 717H1831L1818 730Z" fill="#111"></path>
<path d="M1820 760H1907" stroke="#ccc" stroke-width=".800"></path><path d="M1831 721H1907" stroke="#ddd" stroke-width=".600" stroke-dasharray="1 1"></path>
<rect x="1820" y="755" width="1.3" height="5" fill="#2a9a2a"></rect>
<rect x="1837" y="755" width="1.5" height="5" fill="#f0f040"></rect>
<rect x="1844" y="755" width="1.5" height="5" fill="#f0f040"></rect>
<rect x="1848.5" y="755" width="1.3" height="5" fill="#f0f040"></rect>
<rect x="1870" y="755" width="3" height="5" fill="#e02020"></rect>
<rect x="1875" y="755" width="1.3" height="5" fill="#e02020"></rect>
<rect x="1904.5" y="755" width="1.5" height="5" fill="#e02020"></rect>
<path d="M1819.500 764l2-2.500 2 2.500zM1849.500 764l2.500-2.500 2.500 2.500z" fill="#999"></path>
<text x="1886" y="724" font-size="3.500" fill="#888">Flops/Gid</text><text x="1828" y="769" font-size="2.800" fill="#999">loop self elapsed time - program total elapsed time = 9.02</text>
<rect x="980" y="825" width="32" height="32" fill="#fff" stroke="#8a8a8a" stroke-width="4"></rect><path d="M987 850 L1005 832 M994 832 H1005 V843 M987 839 V850 H998" stroke="#8a8a8a" stroke-width="2.200" fill="none"></path>
</svg>
<div class="tip" style="top: 592px; letter-spacing: -0.003px;">Result: <b>Current</b></div>
<div class="tip" style="top: 613px; letter-spacing: -0.022px;"><b>[loop in matvec at Multiply.c:60]</b></div>
<div class="tip" style="top: 634px; letter-spacing: -0.004px;">Scalar; processes Float32 data type(s)</div>
<div class="tip" style="top: 655px; letter-spacing: -0.047px;">Performance: <b>2.35</b> GFLOPS</div>
<div class="tip" style="top: 676px; letter-spacing: -0.005px;">L1 Arithmetic Intensity: <b>0.19</b> FLOP/Byte</div>
<div class="tip" style="top: 697px; letter-spacing: -0.005px;">Self Time: <b>2.820</b> s</div>
<div class="tip" style="top: 718px; letter-spacing: -0.005px;">Self Elapsed Time: <b>2.820</b> s</div>
<div class="tip" style="top: 739px; letter-spacing: -0.005px;">Total Time: <b>2.820</b> s</div>
<div class="tip" style="top: 760px; letter-spacing: -0.062px;">Self GB/s: <b>12.5336</b></div>
<div class="ct" style="left: 1045px; top: 844px; font-size: 17.6px; color: rgb(17, 17, 17); letter-spacing: 0.241px;">Physical Cores: <b>2</b></div>
<div class="q" style="left:1196px;top:844px">?</div>
<div class="ct" style="left: 1235px; top: 844px; font-size: 17.6px; color: rgb(17, 17, 17); letter-spacing: 0.214px;">App Threads: <b>1</b></div>
<div class="q" style="left:1370px;top:844px">?</div>
<div class="ct" style="left: 1409px; top: 844px; font-size: 17.6px; color: rgb(17, 17, 17); letter-spacing: 0.219px;">Self Elapsed Time: <b>2.820</b> s</div>
<div class="ct" style="left: 1648px; top: 844px; font-size: 17.6px; color: rgb(17, 17, 17); letter-spacing: 0.228px;">Total Time: <b>2.820</b> s</div>
<!-- bottom -->
<div class="a" style="left:1919px;top:4px;width:1px;height:872px;background:#9c9c9c"></div><div class="a" style="left:1920px;top:0;width:1px;height:876px;background:#f0f0f0"></div>
<div class="a" style="left:7px;top:866px;width:1912px;height:5px;background:#f4f4f4"></div>
<div class="a" style="left:0;top:871px;width:1921px;height:5px;background:#c6cad2"></div>
<div class="a" style="left:88px;top:871px;width:771px;height:5px;background:#b4b9c3;border-top:1px solid #70757e"></div>
<div class="a" style="left:7px;top:871px;width:81px;height:5px;background:#fff"></div>
<div class="a" style="left:88px;top:871px;width:1px;height:5px;background:#70757e"></div>
<div class="a" style="left:199px;top:871px;width:1px;height:5px;background:#70757e"></div>
<div class="a" style="left:344px;top:871px;width:1px;height:5px;background:#70757e"></div>
<div class="a" style="left:449px;top:871px;width:1px;height:5px;background:#70757e"></div>
<div class="a" style="left:638px;top:871px;width:1px;height:5px;background:#70757e"></div>
<div class="a" style="left:859px;top:871px;width:1px;height:5px;background:#70757e"></div>
<div class="a" style="left:0;top:41px;width:2px;height:835px;background:#abb0ba"></div>

</body></html>
